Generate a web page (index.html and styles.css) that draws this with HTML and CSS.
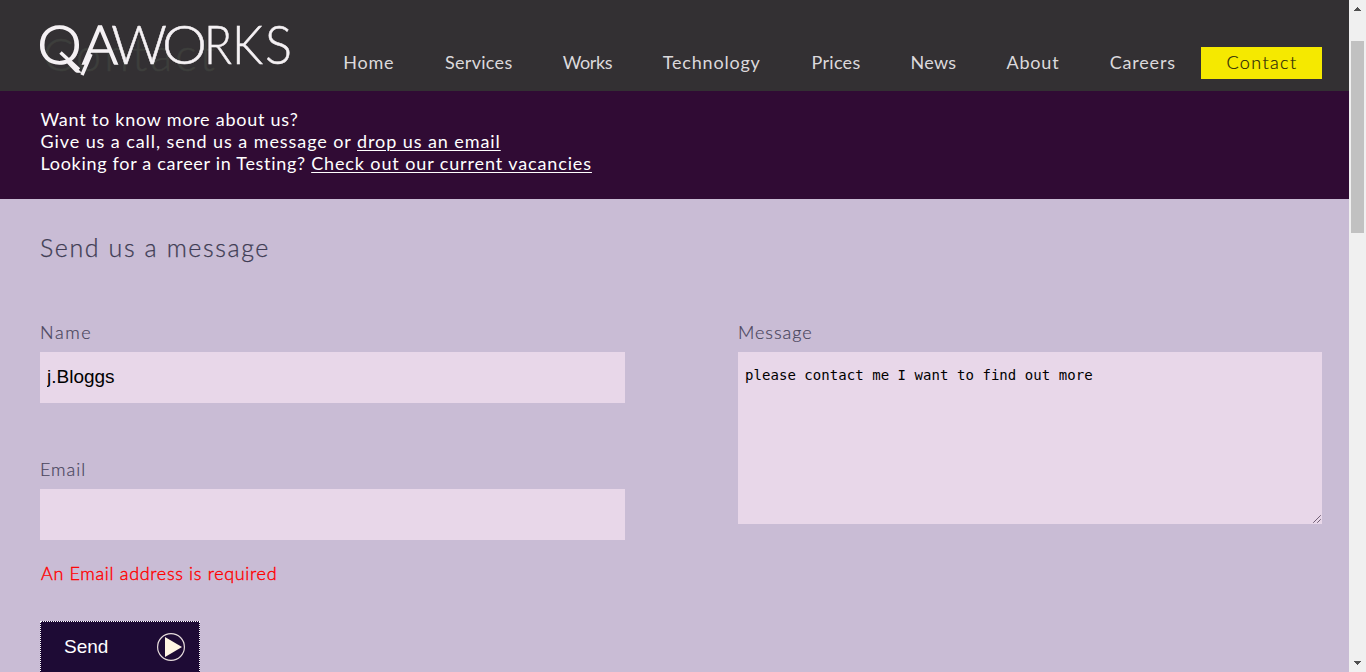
FILE: index.html
```
<!DOCTYPE html>
<html lang="en">
<head>
<meta charset="utf-8">
<title>Contact - QAWorks</title>
<link rel="stylesheet" href="styles.css">
</head>
<body>
<div class="page">
  <header class="header">
    <svg class="logo" width="260" height="60" viewBox="35 20 260 60" role="img" aria-label="QAWorks">
      <text class="ghost" x="43" y="71" textLength="172">Contact</text>
      <g class="logo-bold">
        <text x="37.500" y="64" textLength="44" lengthAdjust="spacingAndGlyphs">Q</text>
        <text x="82" y="64" textLength="36" lengthAdjust="spacingAndGlyphs">A</text>
      </g>
      <path d="M60.500 52.500L79 69.500M91 54L82 75" stroke="#f5f1f4" stroke-width="3.500" fill="none"/>
      <g class="logo-thin">
        <text x="111" y="64" textLength="56" lengthAdjust="spacingAndGlyphs">W</text>
        <text x="162" y="64" textLength="45" lengthAdjust="spacingAndGlyphs">O</text>
        <text x="204" y="64" textLength="28" lengthAdjust="spacingAndGlyphs">R</text>
        <text x="232" y="64" textLength="31" lengthAdjust="spacingAndGlyphs">K</text>
        <text x="265" y="64" textLength="27" lengthAdjust="spacingAndGlyphs">S</text>
      </g>
    </svg>
    <nav class="nav">
      <a class="wide">Home</a><a>Services</a><a class="tight">Works</a><a class="wide">Technology</a><a>Prices</a><a>News</a><a class="wide">About</a><a class="wide">Careers</a><a class="active">Contact</a>
    </nav>
  </header>
  <section class="intro">
    <p class="line1">Want to know more about us?</p>
    <p class="line2">Give us a call, send us a message or <u>drop us an email</u></p>
    <p class="line3">Looking for a career in Testing? <u>Check out our current vacancies</u></p>
  </section>
  <main class="contact">
    <h2 class="title">Send us a message</h2>
    <form class="form">
      <div class="column">
        <label class="label name-label" for="name">Name</label>
        <input class="field" id="name" value="j.Bloggs">
        <label class="label email-label" for="email">Email</label>
        <input class="field" id="email">
        <p class="error">An Email address is required</p>
        <button class="send" type="button"><span>Send</span>
          <svg width="30" height="30" viewBox="0 0 30 30"><circle cx="15" cy="15" r="13.400" fill="none" stroke="#e6dcdc" stroke-width="1.200"/><path d="M9 5V25L26 15Z" fill="#fff5e4"/></svg>
        </button>
      </div>
      <div class="column">
        <label class="label" for="message">Message</label>
        <div class="message-box">
          <textarea class="message" id="message">please contact me I want to find out more</textarea>
          <svg class="grip" width="8" height="8" viewBox="0 0 8 8" shape-rendering="crispEdges"><path d="M0 7h1v-1h1v-1h1v-1h1v-1h1v-1h1v-1h1v-1M4 7h1v-1h1v-1h1v-1" fill="none" stroke="#65546a" stroke-width=".7"/></svg>
        </div>
      </div>
    </form>
  </main>
</div>
<aside class="scrollbar">
  <svg width="17" height="17"><path d="M8 7h1v1h1v1h1v1h1v1H5v-1h1V9h1V8h1z" fill="#505050"/></svg>
  <div class="thumb"></div>
  <svg width="17" height="17"><path d="M5 6h7v1h-1v1h-1v1H9v1H8V9H7V8H6V7H5z" fill="#505050"/></svg>
</aside>
</body>
</html>
```
FILE: styles.css
```
* { box-sizing: border-box; }
body {
  margin: 0;
  display: flex;
  width: 1366px;
  height: 672px;
  overflow: hidden;
  font-family: Lato, "Open Sans", sans-serif;
  font-size: 18px;
}
p, h2 { margin: 0; }
.page { width: 1349px; height: 672px; overflow: hidden; background: #c9bcd5; }
.header { display: flex; align-items: flex-start; height: 91px; padding: 20px 27px 0 35px; background: #333033; }
.logo { flex: none; margin-right: 23px; overflow: visible; }
.logo text { font-family: Lato, sans-serif; }
.logo .ghost { font-size: 45px; font-weight: 300; fill: #3d3e3c; stroke: #3d3e3c; stroke-width: .5px; }
.logo-bold { font-size: 53px; font-weight: 300; fill: #f5f1f4; stroke: #f5f1f4; stroke-width: 1.5px; }
.logo-thin { font-size: 53px; font-weight: 300; fill: #f5f1f4; stroke: #f5f1f4; stroke-width: .5px; }
.nav {
  display: grid;
  grid-template-columns: 101.5px 118.5px 99px 149.5px 99px 96px 103px 116.5px 121px;
  margin-top: 27px;
  height: 32px;
  line-height: 31px;
  text-align: center;
  color: #dcd9dc;
  letter-spacing: .3px;
}
.nav .wide { letter-spacing: .8px; }
.nav .tight { letter-spacing: -.4px; }
.nav .active { padding-left: 1px; background: #f5e900; color: #29260a; font-weight: 300; letter-spacing: 1.4px; -webkit-text-stroke: .2px #29260a; }
.intro { height: 108px; padding: 17px 41px 0 40.5px; background: #300b34; color: #fff; line-height: 22px; white-space: nowrap; }
.line1 { letter-spacing: .75px; }
.line2 { letter-spacing: .92px; }
.line3 { letter-spacing: .7px; }
.line3 u { letter-spacing: .88px; }
.intro u { text-underline-offset: 2px; text-decoration-thickness: 1px; }
.contact { padding: 32px 27px 0 40px; color: #48445c; }
.title { font-size: 25px; font-weight: 300; line-height: 32px; letter-spacing: 1.6px; color: #403c54; -webkit-text-stroke: .25px #403c54; }
.form { display: grid; grid-template-columns: 585px 584px; column-gap: 113px; margin-top: 56px; }
.column { display: flex; flex-direction: column; align-items: flex-start; }
.label { height: 33px; line-height: 26px; letter-spacing: .95px; font-weight: 300; -webkit-text-stroke: .2px #48445c; }
.name-label { letter-spacing: 1.6px; }
.field { width: 100%; height: 51px; padding: 0 7px 2px; border: 0; background: #e8d7e9; color: #000; font: 19px "Liberation Sans", Arial, sans-serif; }
.email-label { margin-top: 53px; }
.error { margin: 22px 0 0 1px; line-height: 22px; color: #f00; font-weight: 300; letter-spacing: .67px; -webkit-text-stroke: .4px #f00; }
.send {
  display: flex;
  justify-content: space-between;
  align-items: center;
  width: 160px;
  height: 52px;
  margin-top: 37px;
  padding: 0 13px 0 23px;
  border: 1px dotted #fff;
  border-radius: 0;
  background: #1e0b35;
  color: #fff;
  font: 19px "Liberation Sans", Arial, sans-serif;
}
.message-box { position: relative; width: 584px; height: 172px; }
.message { display: block; width: 100%; height: 100%; padding: 14px 7px; border: 0; resize: none; background: #e8d7e9; color: #000; font: 14px/18px "DejaVu Sans Mono", monospace; letter-spacing: .05px; }
.grip { position: absolute; right: 1px; bottom: 1px; }
.scrollbar { display: flex; flex-direction: column; width: 17px; height: 672px; background: #f0f0f0; }
.scrollbar svg { flex: none; display: block; }
.thumb { width: 13px; height: 192px; margin: 24px 0 auto 2px; background: #c1c1c1; }
```
